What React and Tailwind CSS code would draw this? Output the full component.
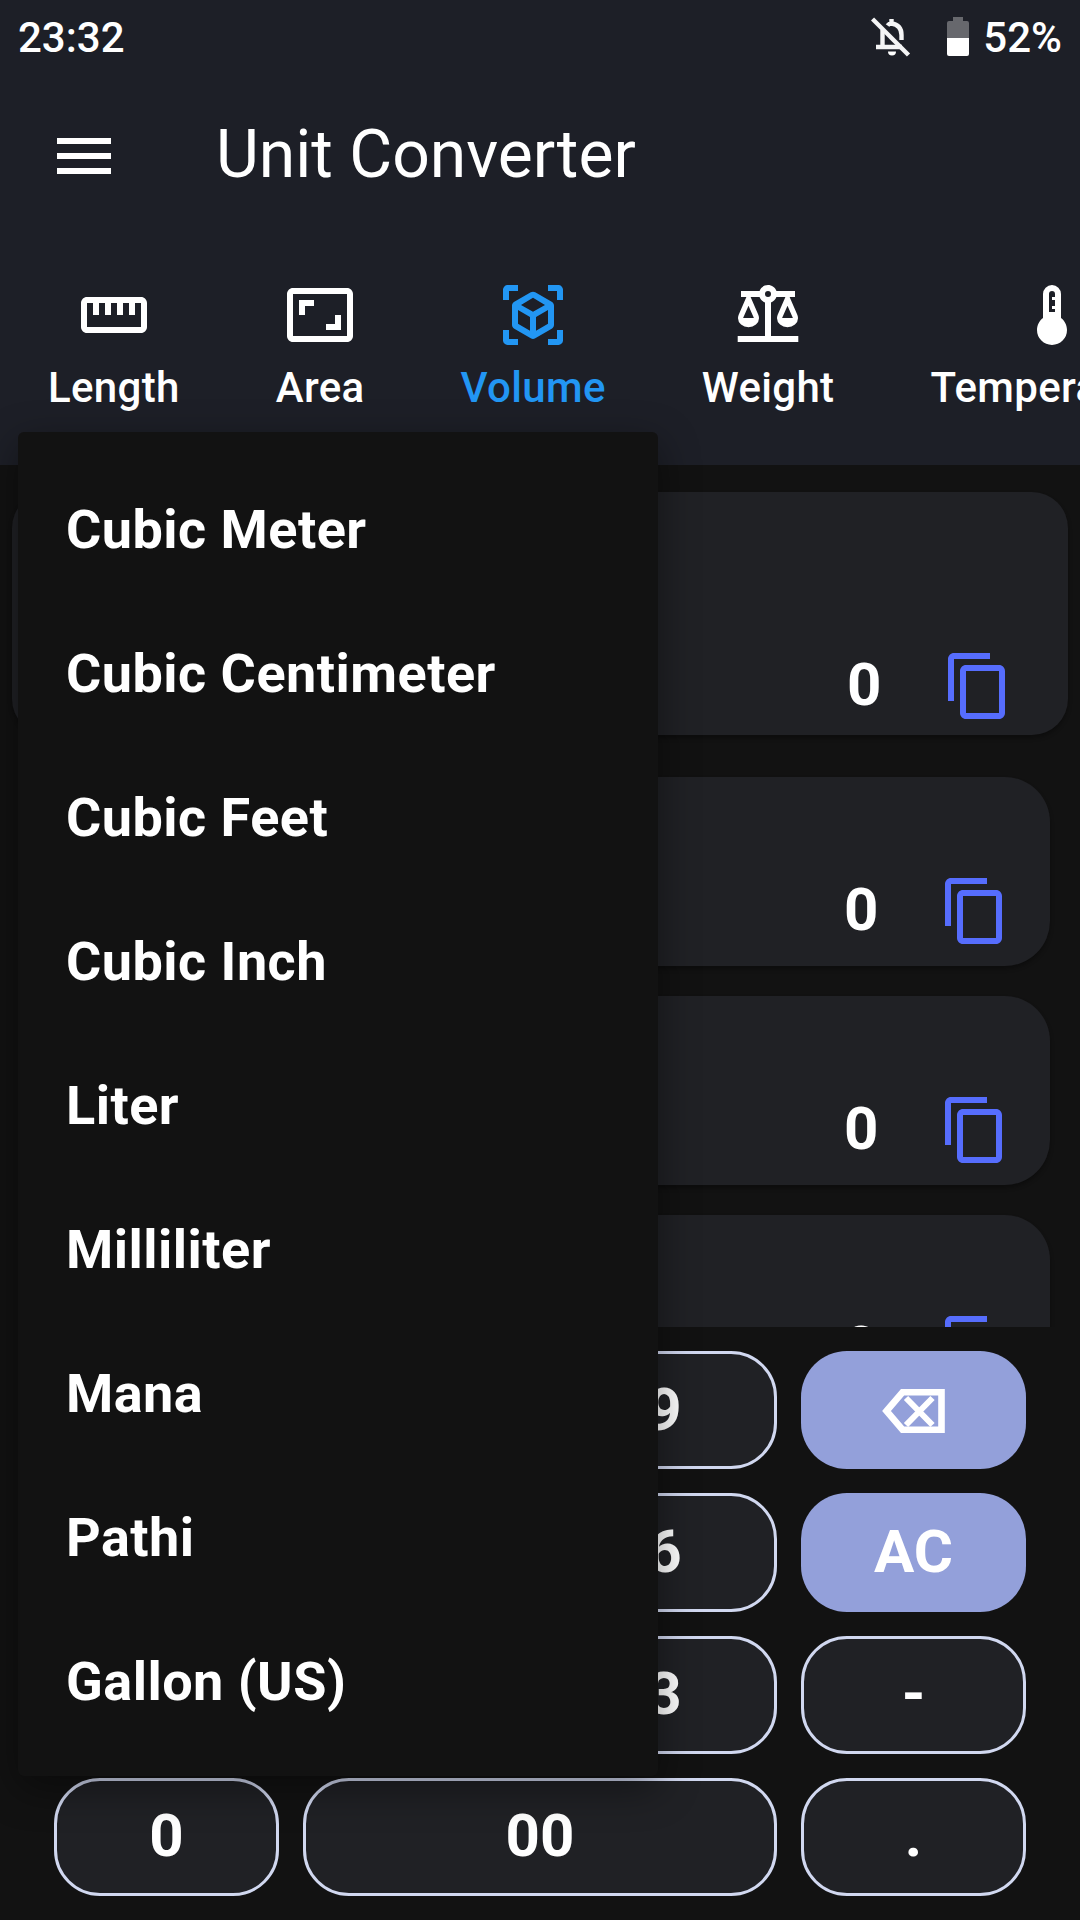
import { MdMenu, MdContentCopy, MdStraighten, MdAspectRatio } from "react-icons/md";

function Glyph({ d }) {
  return (
    <svg viewBox="0 0 24 24" className="size-[72px] fill-current" fillRule="evenodd">
      <path d={d} />
    </svg>
  );
}

const CUBE =
  "M17,22V20H20V17H22V20.5C22,20.89 21.84,21.24 21.54,21.54C21.24,21.84 20.89,22 20.5,22H17M7,22H3.5C3.11,22 2.76,21.84 2.46,21.54C2.16,21.24 2,20.89 2,20.5V17H4V20H7V22M17,2H20.5C20.89,2 21.24,2.16 21.54,2.46C21.84,2.76 22,3.11 22,3.5V7H20V4H17V2M7,2V4H4V7H2V3.5C2,3.11 2.16,2.76 2.46,2.46C2.76,2.16 3.11,2 3.5,2H7M13,17.25L17,14.95V10.36L13,12.66V17.25M12,10.92L16,8.63L12,6.28L8,8.63L12,10.92M7,14.95L11,17.25V12.66L7,10.36V14.95M18.23,7.59C18.73,7.91 19,8.34 19,8.91V15.23C19,15.8 18.73,16.23 18.23,16.55L12.75,19.73C12.25,20.05 11.75,20.05 11.25,19.73L5.77,16.55C5.27,16.23 5,15.8 5,15.23V8.91C5,8.34 5.27,7.91 5.77,7.59L11.25,4.41C11.5,4.28 11.75,4.22 12,4.22C12.25,4.22 12.5,4.28 12.75,4.41L18.23,7.59Z";
const SCALE =
  "M12,2C10.7,2 9.6,2.8 9.18,4H3V6H4.8L2.2,12C2.05,12.4 2,12.8 2,13.1A3.5,2.95 0 0,0 9,13.1C9,12.8 8.95,12.4 8.8,12L6.2,6H9.17C9.5,6.85 10.15,7.5 11,7.83V19H1.9V21H22.1V19H13V7.82C13.85,7.5 14.5,6.85 14.82,6H17.8L15.2,12C15.05,12.4 15,12.8 15,13.1A3.5,2.95 0 0,0 22,13.1C22,12.8 21.95,12.4 21.8,12L19.2,6H21V4H14.83C14.4,2.8 13.27,2 12,2ZM12,4A1,1 0 0,1 12,6A1,1 0 0,1 12,4ZM5.5,8.9L7.3,13H3.7ZM18.5,8.9L20.3,13H16.7Z";
const THERMO =
  "M17,17A5,5 0 0,1 7,17C7,15.36 7.79,13.91 9,13V5A3,3 0 0,1 15,5V13C16.21,13.91 17,15.36 17,17ZM11,5V11H13V10H12V9H13V7H12V6H13V5A1,1 0 0,0 11,5Z";

const tabs = [
  { name: "Length", icon: <MdStraighten className="size-[72px]" /> },
  { name: "Area", icon: <MdAspectRatio className="size-[72px]" /> },
  { name: "Volume", icon: <Glyph d={CUBE} />, active: true },
  { name: "Weight", icon: <Glyph d={SCALE} /> },
  { name: "Temperature", icon: <Glyph d={THERMO} /> },
];

const units = ["Cubic Meter", "Cubic Centimeter", "Cubic Feet", "Cubic Inch", "Liter", "Milliliter", "Mana", "Pathi", "Gallon (US)"];

// Empty labels are the keys that the open menu covers completely.
const keys = ["", "", "9", "⌫", "", "", "6", "AC", "", "", "3", "-", "0", "00", "."];

function StatusBar() {
  return (
    <div className="flex h-[72px] items-center justify-between pr-[18px] pl-[18px] text-[42px] leading-[48px] font-medium">
      <span className="pt-[3px]">23:32</span>
      <div className="flex items-center">
        <svg viewBox="0 0 40 42" className="mt-px mr-[36px] h-[42px] w-10" fill="none" stroke="#f4f4f5">
          <path d="M16.5 9.5Q18 7.5 20.5 7.5Q30.5 9 30.5 19V24M20.5 3V8M11.5 14V31M5 31H31" strokeWidth="4.4" />
          <path d="M17 35.5H25Q25 39.5 21 39.5Q17 39.5 17 35.5Z" fill="#fff" stroke="none" />
          <path d="M1.5 3L37.5 39" strokeWidth="4.4" />
        </svg>
        <svg viewBox="0 0 22 39" className="mr-[14px] h-[39px] w-[22px]">
          <path d="M6 0H16V4H20Q22 4 22 6V21H0V6Q0 4 2 4H6Z" fill="#67686d" />
          <path d="M0 21H22V37Q22 39 20 39H2Q0 39 0 37Z" fill="#fff" />
        </svg>
        <span className="pt-[3px]">52%</span>
      </div>
    </div>
  );
}

function ResultCard({ main = false }) {
  return (
    <div
      className={
        "flex shrink-0 items-end justify-end bg-[#202125] shadow-[0_3px_4px_rgba(0,0,0,0.3)] " +
        (main ? "mx-3 h-[243px] rounded-[36px] pr-[54px] pb-[13px]" : "mx-[30px] h-[189px] rounded-[45px] pr-[39px] pb-[19px]")
      }
    >
      <span className="mr-[60.5px] pb-px text-[60px] leading-[72px] font-bold">0</span>
      <MdContentCopy className="size-[72px] text-[#566dfd]" />
    </div>
  );
}

function BackspaceIcon() {
  return (
    <svg viewBox="0 0 63 44" className="mt-[3px] h-11 w-[63px]" fill="none" stroke="#fff">
      <path d="M4.5 22L20.5 3.3H59.5V40.7H20.5Z" strokeWidth="6.6" />
      <path d="M24 9L50.5 36M50.5 9L24 36" strokeWidth="6" />
    </svg>
  );
}

function Key({ label }) {
  const base = "flex items-center justify-center rounded-[46px] pb-px text-[60px] leading-[70px] font-bold ";
  const tone = label === "AC" || label === "⌫" ? "bg-[#93a0da]" : "border-3 border-[#d1d8f0] bg-[#202125]";
  return (
    <button className={base + tone + (label === "00" ? " col-span-2" : "")}>
      {label === "⌫" ? <BackspaceIcon /> : label}
    </button>
  );
}

export default function App() {
  return (
    <div className="relative flex h-[1920px] w-[1080px] flex-col overflow-hidden bg-[#121212] font-['Roboto',sans-serif] text-white">
      <header className="h-[465px] shrink-0 bg-[#1d1f27]">
        <StatusBar />
        <div className="flex h-[168px] items-center pl-12">
          <MdMenu className="size-[72px]" />
          <h1 className="ml-24 pb-0.5 text-[66px] leading-[78px] font-normal">Unit Converter</h1>
        </div>
        <nav className="flex pt-[39px]">
          {tabs.map((t) => (
            <div key={t.name} className={"flex shrink-0 flex-col items-center px-12 " + (t.active ? "text-[#2296f3]" : "")}>
              {t.icon}
              <span className="mt-[13px] text-[42px] leading-[48px] font-medium tracking-[0.34px]">{t.name}</span>
            </div>
          ))}
        </nav>
      </header>

      <main className="flex h-[862px] shrink-0 flex-col gap-[30px] overflow-hidden pt-[27px]">
        <div className="mb-3 flex flex-col">
          <ResultCard main />
        </div>
        <ResultCard />
        <ResultCard />
        <ResultCard />
      </main>

      <section className="mx-[54px] mt-6 grid h-[545px] shrink-0 grid-cols-4 grid-rows-4 gap-6">
        {keys.map((k, i) => (
          <Key key={i} label={k} />
        ))}
      </section>

      <div className="absolute top-[432px] left-[18px] w-[639.5px] rounded-md bg-[#121212] py-6 shadow-[0_12px_40px_rgba(0,0,0,0.42)]">
        {units.map((u) => (
          <div key={u} className="flex h-36 items-center px-12 pt-[3px] text-[54px] leading-[64px] font-bold tracking-[0.47px]">
            {u}
          </div>
        ))}
      </div>
    </div>
  );
}
